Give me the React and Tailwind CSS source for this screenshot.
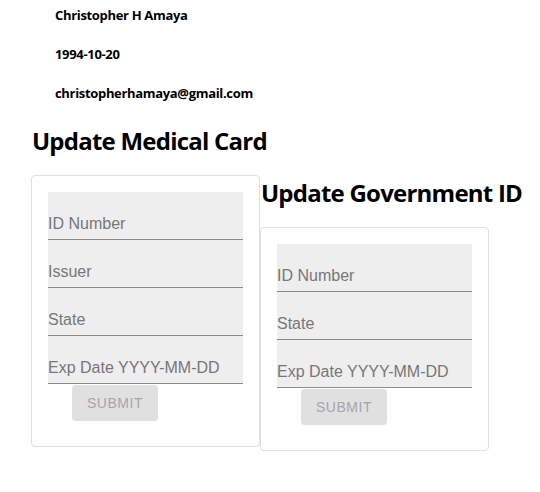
import React from 'react';

const heading = "font-['Open_Sans',_'Noto_Sans',_sans-serif]";

function Field({ placeholder }) {
  return (
    <input
      type="text"
      placeholder={placeholder}
      className="block w-full h-[48px] pt-[23px] pb-[6px] px-0 bg-[#eeeeee] border-0 border-b border-[#8c8c8c] text-[16px] leading-[18px] font-['Liberation_Sans',_Arial,_sans-serif] text-[#333] placeholder:text-[#777777] outline-none"
    />
  );
}

function FormCard({ title, fields }) {
  return (
    <div className="w-[229px] shrink-0">
      <h2 className={`${heading} tracking-[-0.032em] text-[24px] leading-[32px] font-bold text-black pl-[1px] whitespace-nowrap`}>
        {title}
      </h2>
      <div className="mt-[18px] border border-[#e0e0e0] rounded-[4px] pt-[16px] px-[16px] pb-[25px] bg-white">
        {fields.map((f) => (
          <Field key={f} placeholder={f} />
        ))}
        <button
          type="button"
          disabled
          className="mt-[1px] ml-[24px] w-[86px] h-[36px] rounded-[4px] bg-[#e0e0e0] text-[#a6a6a6] text-[14px] tracking-[0.04em] uppercase font-['Liberation_Sans',_Arial,_sans-serif]"
        >
          Submit
        </button>
      </div>
    </div>
  );
}

export default function App() {
  return (
    <div className="w-[540px] h-[492px] bg-white overflow-hidden pt-[6px]">
      {/* profile info */}
      <div className={`${heading} tracking-[-0.025em] pl-[55px] text-[13px] leading-[18px] font-bold text-black flex flex-col gap-[21px]`}>
        <div>Christopher H Amaya</div>
        <div>1994-10-20</div>
        <div>christopherhamaya@gmail.com</div>
      </div>

      <div className="mt-[23px] pl-[31px] flex items-start">
        <FormCard
          title="Update Medical Card"
          fields={['ID Number', 'Issuer', 'State', 'Exp Date YYYY-MM-DD']}
        />
        <div className="mt-[52px]">
          <FormCard
            title="Update Government ID"
            fields={['ID Number', 'State', 'Exp Date YYYY-MM-DD']}
          />
        </div>
      </div>
    </div>
  );
}
